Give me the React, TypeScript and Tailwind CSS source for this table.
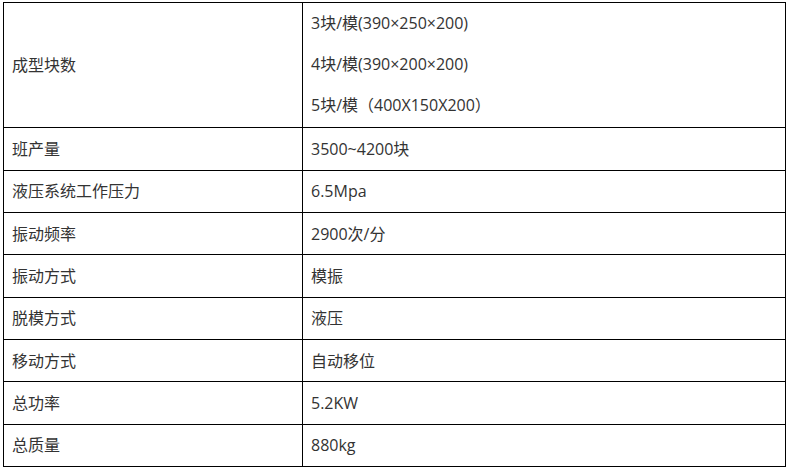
const rows: [string, string][] = [
  ["班产量", "3500~4200块"],
  ["液压系统工作压力", "6.5Mpa"],
  ["振动频率", "2900次/分"],
  ["振动方式", "模振"],
  ["脱模方式", "液压"],
  ["移动方式", "自动移位"],
  ["总功率", "5.2KW"],
  ["总质量", "880kg"],
];

export default function App() {
  return (
    <div
      className="w-[788px] h-[468px] bg-white pt-[2px] pl-[3px] text-[16px] text-[#333]"
      style={{ fontFamily: '"Open Sans", "Noto Sans CJK SC", sans-serif' }}
    >
      <table className="w-[783px] table-fixed border-collapse">
        <colgroup>
          <col className="w-[299px]" />
          <col />
        </colgroup>
        <tbody>
          <tr className="h-[125px]">
            <td className="border border-black pl-[8px] align-middle">成型块数</td>
            <td className="border border-black pl-[8px] align-top">
              <div className="flex flex-col pt-[9px] gap-[19px] leading-[22px]">
                <span>3块/模(390×250×200)</span>
                <span>4块/模(390×200×200)</span>
                <span>5块/模（400X150X200）</span>
              </div>
            </td>
          </tr>
          {rows.map(([k, v], i) => (
            <tr key={k} className={i % 3 === 2 ? "h-[42px]" : "h-[42.5px]"}>
              <td className="border border-black pl-[8px]">{k}</td>
              <td className="border border-black pl-[8px]">{v}</td>
            </tr>
          ))}
        </tbody>
      </table>
    </div>
  );
}
